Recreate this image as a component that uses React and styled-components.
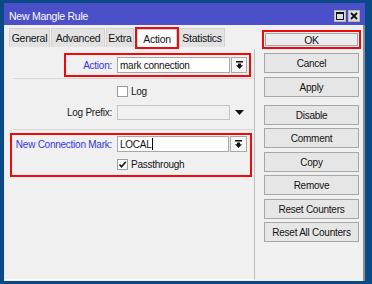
import React from 'react'
import styled, { createGlobalStyle } from 'styled-components'

const GlobalStyle = createGlobalStyle`
  html, body {
    margin: 0;
    padding: 0;
    background: #0a4a87;
  }
  body {
    font-family: "Liberation Sans", Arial, sans-serif;
    font-size: 10px;
    letter-spacing: -0.25px;
    color: #141414;
  }
`

const Desktop = styled.div`
  width: 372px;
  height: 284px;
  padding: 3px 0 0 4px;
  box-sizing: border-box;
`
const Window = styled.div`
  width: 361px;
  height: 278px;
  display: flex;
  flex-direction: column;
`
const TitleBar = styled.div`
  height: 22px;
  box-sizing: border-box;
  padding: 4px 5px 0 5px;
  background: #4b4fc8;
  color: #fff;
  display: flex;
  align-items: center;
`
const Title = styled.div`
  flex: 1;
  font-size: 10.5px;
`
const TitleButtons = styled.div`
  display: flex;
  gap: 2px;
`
const TitleButton = styled.div`
  width: 12px;
  height: 12px;
  box-sizing: border-box;
  background: #dedede;
  border: 1px solid #b4b4b4;
  display: flex;
  align-items: center;
  justify-content: center;
`
const Body = styled.div`
  flex: 1;
  display: flex;
  background: #f0f0f0;
  border-left: 1px solid #e8e8f4;
  border-right: 2px solid #8d8d8d;
`
const LeftPane = styled.div`
  width: 250px;
  display: flex;
  flex-direction: column;
  padding-bottom: 1px;
`
const TabRow = styled.div`
  display: flex;
  align-items: flex-end;
  padding-left: 4px;
  height: 24px;
`
const Tab = styled.div`
  width: ${p => p.w}px;
  height: ${p => (p.active ? 18 : 19)}px;
  margin-right: 1px;
  margin-bottom: ${p => (p.active ? 0 : 2)}px;
  box-sizing: border-box;
  background: ${p => (p.active ? '#ffffff' : '#e2e2e2')};
  border: 1px solid #d2d2d2;
  border-bottom: none;
  display: flex;
  align-items: center;
  justify-content: center;
  font-size: 10.5px;
`
const Highlight = styled.div`
  border: 2px solid #ee0a0a;
  box-sizing: border-box;
`
const TabMark = styled(Highlight)`
  margin-right: 0;
  & ${Tab} {
    margin: 0;
  }
`
const TabPanel = styled.div`
  flex: 1;
  display: flex;
  flex-direction: column;
  border-right: 1px solid #bdbdbd;
  border-bottom: 1px solid #ffffff;
`
const ActionBox = styled(Highlight)`
  margin: 4px 0 0 59px;
  width: 187px;
  padding: 2px 2px 2px 0;
  display: flex;
  align-items: center;
`
const MarkBox = styled(Highlight)`
  margin: 3px 0 0 5px;
  width: 242px;
  padding: 1px 3px 5px 0;
  display: flex;
  flex-direction: column;
`
const Separator = styled.div`
  height: 1px;
  margin: ${p => p.top}px 0 0 8px;
  background: #d6d6d6;
`
const FieldRow = styled.div`
  display: flex;
  align-items: center;
  margin-top: ${p => p.top || 0}px;
`
const Label = styled.div`
  width: ${p => p.w}px;
  margin-right: 5px;
  text-align: right;
  white-space: nowrap;
  color: ${p => (p.changed ? '#3434df' : '#1a1a1a')};
`
const Input = styled.div`
  width: ${p => p.w || 113}px;
  height: ${p => p.h || 16}px;
  box-sizing: border-box;
  border: 1px solid ${p => (p.disabled ? '#c4c4c4' : '#a8a8a8')};
  background: ${p => (p.disabled ? '#f0f0f0' : '#ffffff')};
  padding-left: 2px;
  display: flex;
  align-items: center;
  color: #111;
`
const Caret = styled.span`
  display: inline-block;
  width: 1px;
  height: 12px;
  background: #000;
  margin-left: 0.5px;
`
const DropButton = styled.div`
  width: ${p => p.w || 16}px;
  height: 16px;
  margin-left: 1px;
  box-sizing: border-box;
  border: 1px solid #a8a8a8;
  background: #f6f6f6;
  display: flex;
  align-items: center;
  justify-content: center;
`
const Arrow = styled.div`
  margin-left: 5px;
  display: flex;
`
const CheckRow = styled.div`
  display: flex;
  align-items: center;
  padding-left: ${p => p.indent}px;
  margin-top: ${p => p.top}px;
`
const CheckBox = styled.div`
  width: 11px;
  height: 11px;
  box-sizing: border-box;
  background: #fff;
  border: 1px solid #9c9c9c;
  margin-right: 3px;
  display: flex;
  align-items: center;
  justify-content: center;
`
const RightPane = styled.div`
  flex: 1;
  display: flex;
  flex-direction: column;
  padding: 5px 2px 0 7px;
`
const Button = styled.div`
  height: ${p => p.h || 20}px;
  margin: ${p => p.top || 0}px 2px 0 2px;
  box-sizing: border-box;
  background: #e6e6e6;
  border: 1px solid #a6a6a6;
  display: flex;
  align-items: center;
  justify-content: center;
  font-size: 10px;
`
const OkMark = styled(Highlight)`
  padding: 1px;
  & ${Button} {
    margin: 0;
    background: #ececec;
    font-size: 10.5px;
  }
`

const DropIcon = () => (
  <svg width="7" height="8" viewBox="0 0 7 8">
    <rect x="0" y="0" width="7" height="1.5" fill="#111" />
    <path d="M2 2.5h3v1.8h2L3.5 8 0 4.3h2z" fill="#111" />
  </svg>
)

const CheckIcon = () => (
  <svg width="9" height="9" viewBox="0 0 9 9">
    <path d="M1.5 4.5l2 2.2L7.8 1.8" stroke="#111" strokeWidth="1.6" fill="none" />
  </svg>
)

const buttons = [
  { text: 'Cancel', top: 4 },
  { text: 'Apply', top: 4 },
  { text: 'Disable', top: 8 },
  { text: 'Comment', top: 3 },
  { text: 'Copy', top: 4 },
  { text: 'Remove', top: 3 },
  { text: 'Reset Counters', top: 4 },
  { text: 'Reset All Counters', top: 3 },
]

export default function App() {
  return (
    <Desktop>
      <GlobalStyle />
      <Window>
        <TitleBar>
          <Title>New Mangle Rule</Title>
          <TitleButtons>
            <TitleButton>
              <svg width="8" height="8" viewBox="0 0 8 8">
                <rect x="0.5" y="0.5" width="7" height="7" fill="none" stroke="#111" />
                <rect x="0" y="0" width="8" height="2" fill="#111" />
              </svg>
            </TitleButton>
            <TitleButton>
              <svg width="8" height="8" viewBox="0 0 8 8">
                <path d="M1 1l6 6M7 1L1 7" stroke="#111" strokeWidth="1.8" />
              </svg>
            </TitleButton>
          </TitleButtons>
        </TitleBar>
        <Body>
          <LeftPane>
            <TabRow>
              <Tab w={41}>General</Tab>
              <Tab w={54}>Advanced</Tab>
              <Tab w={28}>Extra</Tab>
              <TabMark>
                <Tab w={40} active>Action</Tab>
              </TabMark>
              <Tab w={46}>Statistics</Tab>
            </TabRow>
            <TabPanel>
              <ActionBox>
                <Label w={46} changed>Action:</Label>
                <Input>mark connection</Input>
                <DropButton><DropIcon /></DropButton>
              </ActionBox>
              <Separator top={1} />
              <CheckRow indent={112} top={7}>
                <CheckBox />
                Log
              </CheckRow>
              <FieldRow top={8}>
                <Label w={107}>Log Prefix:</Label>
                <Input h={15} disabled />
                <Arrow>
                  <svg width="9" height="5" viewBox="0 0 9 5">
                    <path d="M0 0h9L4.5 5z" fill="#111" />
                  </svg>
                </Arrow>
              </FieldRow>
              <Separator top={9} />
              <MarkBox>
                <FieldRow>
                  <Label w={100} changed>New Connection Mark:</Label>
                  <Input w={112}>LOCAL<Caret /></Input>
                  <DropButton w={17}><DropIcon /></DropButton>
                </FieldRow>
                <CheckRow indent={105} top={7}>
                  <CheckBox><CheckIcon /></CheckBox>
                  Passthrough
                </CheckRow>
              </MarkBox>
            </TabPanel>
          </LeftPane>
          <RightPane>
            <OkMark>
              <Button h={13}>OK</Button>
            </OkMark>
            {buttons.map(b => (
              <Button key={b.text} top={b.top}>{b.text}</Button>
            ))}
          </RightPane>
        </Body>
      </Window>
    </Desktop>
  )
}
